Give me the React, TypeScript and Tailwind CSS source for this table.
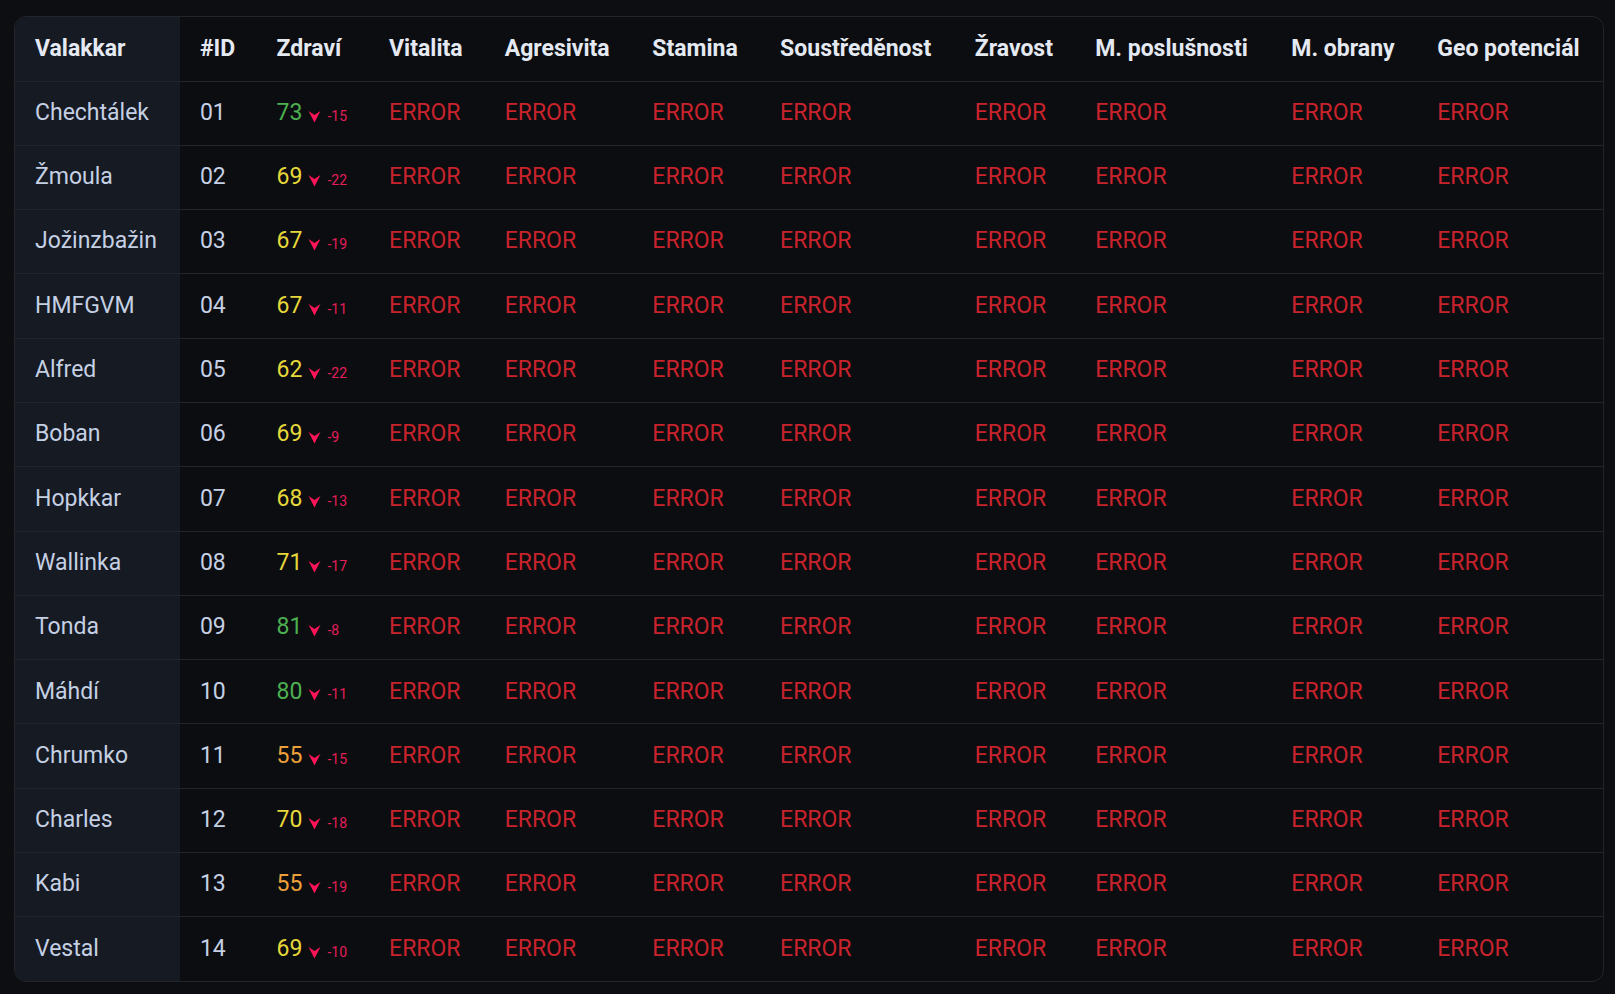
import React from "react";

type Row = { name: string; id: string; health: number; delta: number };

const rows: Row[] = [
  { name: "Chechtálek", id: "01", health: 73, delta: -15 },
  { name: "Žmoula", id: "02", health: 69, delta: -22 },
  { name: "Jožinzbažin", id: "03", health: 67, delta: -19 },
  { name: "HMFGVM", id: "04", health: 67, delta: -11 },
  { name: "Alfred", id: "05", health: 62, delta: -22 },
  { name: "Boban", id: "06", health: 69, delta: -9 },
  { name: "Hopkkar", id: "07", health: 68, delta: -13 },
  { name: "Wallinka", id: "08", health: 71, delta: -17 },
  { name: "Tonda", id: "09", health: 81, delta: -8 },
  { name: "Máhdí", id: "10", health: 80, delta: -11 },
  { name: "Chrumko", id: "11", health: 55, delta: -15 },
  { name: "Charles", id: "12", health: 70, delta: -18 },
  { name: "Kabi", id: "13", health: 55, delta: -19 },
  { name: "Vestal", id: "14", health: 69, delta: -10 },
];

const stats = [
  "Vitalita",
  "Agresivita",
  "Stamina",
  "Soustředěnost",
  "Žravost",
  "M. poslušnosti",
  "M. obrany",
  "Geo potenciál",
];

function healthColor(h: number) {
  if (h >= 73) return "text-[#4cb050]";
  if (h >= 60) return "text-[#e6d83a]";
  return "text-[#eda03a]";
}

function DownArrow() {
  return (
    <svg width="13" height="13" viewBox="0 0 12 12" className="inline-block mt-[6px]">
      <path d="M0.5 1 L6 11.5 L11.5 1 L6 4.5 Z" fill="#ff1458" />
    </svg>
  );
}

export default function App() {
  return (
    <div className="min-h-screen bg-[#0d0e12] px-[14px] pt-[16px] font-['Roboto',sans-serif]">
      <div className="rounded-xl border border-[#23252b] overflow-hidden bg-[#0c0d11] w-[1590px]">
        <table className="w-full border-collapse text-left">
          <thead>
            <tr className="border-b border-[#22252b]">
              <th className="bg-[#161a22] px-5 h-[64px] text-[23px] font-bold text-[#e4e9f2] whitespace-nowrap">
                Valakkar
              </th>
              <th className="px-5 text-[23px] font-bold text-[#e4e9f2] whitespace-nowrap">#ID</th>
              <th className="px-5 text-[23px] font-bold text-[#e4e9f2] whitespace-nowrap">Zdraví</th>
              {stats.map((s) => (
                <th key={s} className="px-5 text-[23px] font-bold text-[#e4e9f2] whitespace-nowrap">
                  {s}
                </th>
              ))}
            </tr>
          </thead>
          <tbody>
            {rows.map((r, i) => (
              <tr
                key={r.id}
                className={i < rows.length - 1 ? "border-b border-[#22252b]" : ""}
              >
                <td className="bg-[#161a22] px-5 h-[64.3px] text-[23px] text-[#c5d0e4] whitespace-nowrap">
                  {r.name}
                </td>
                <td className="px-5 text-[23px] text-[#c5d0e4]">{r.id}</td>
                <td className="px-5 whitespace-nowrap">
                  <span className="inline-flex items-center gap-[6px]">
                    <span className={`text-[23px] ${healthColor(r.health)}`}>{r.health}</span>
                    <DownArrow />
                    <span className="text-[14px] text-[#e41e5a] mt-[6px]">{r.delta}</span>
                  </span>
                </td>
                {stats.map((s) => (
                  <td key={s} className="px-5 text-[23px] text-[#c8232c]">
                    ERROR
                  </td>
                ))}
              </tr>
            ))}
          </tbody>
        </table>
      </div>
    </div>
  );
}
